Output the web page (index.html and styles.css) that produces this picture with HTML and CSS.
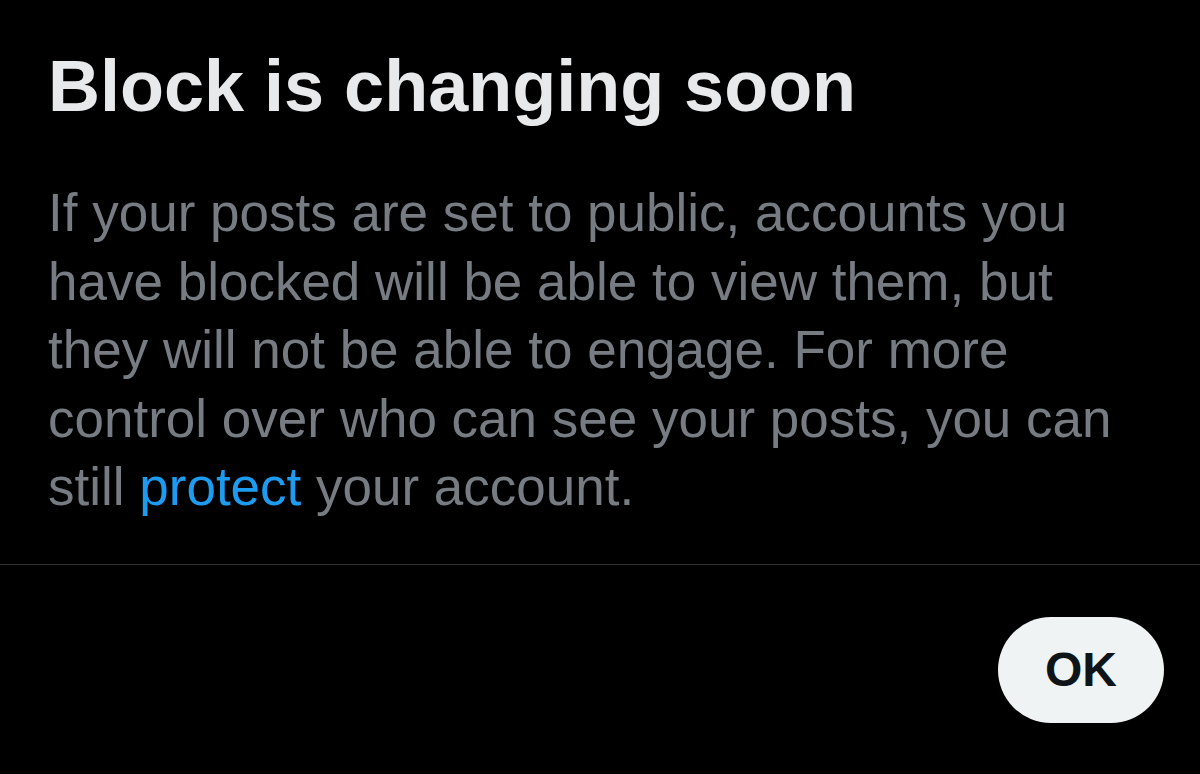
FILE: index.html
```html
<!DOCTYPE html>
<html lang="en">
<head>
<meta charset="utf-8">
<title>Block is changing soon</title>
<link rel="stylesheet" href="styles.css">
</head>
<body>
<div class="dialog">
  <div class="content">
    <h1 class="title">Block is changing soon</h1>
    <p class="body">If your posts are set to public, accounts you<br>have blocked will be able to view them, but<br>they will not be able to engage. For more<br>control over who can see your posts, you can<br>still <a class="link" href="#">protect</a> your account.</p>
  </div>
  <div class="divider"></div>
  <div class="actions">
    <button class="ok">OK</button>
  </div>
</div>
</body>
</html>
```
FILE: styles.css
```css
html, body {
  margin: 0;
  padding: 0;
  background: #000;
  width: 1200px;
  height: 774px;
  overflow: hidden;
}
.dialog {
  font-family: "Liberation Sans", Arial, sans-serif;
  display: flex;
  flex-direction: column;
}
.content {
  padding: 44px 36px 0 48px;
}
.title {
  margin: 0;
  font-size: 72px;
  line-height: 84px;
  font-weight: 700;
  color: #e7e9ea;
  white-space: nowrap;
}
.body {
  margin: 51px 0 0 0;
  font-size: 53px;
  line-height: 68.5px;
  color: #777c82;
  white-space: nowrap;
}
.link {
  color: #1d9bf0;
  text-decoration: none;
}
.divider {
  margin-top: 42px;
  height: 1px;
  background: #2f3336;
}
.actions {
  display: flex;
  justify-content: flex-end;
  padding: 52px 36px 0 0;
}
.ok {
  width: 166px;
  height: 106px;
  border: none;
  border-radius: 53px;
  background: #eff3f4;
  color: #0f1419;
  font-family: "Liberation Sans", Arial, sans-serif;
  font-weight: 700;
  font-size: 48px;
  padding: 0;
}
```
